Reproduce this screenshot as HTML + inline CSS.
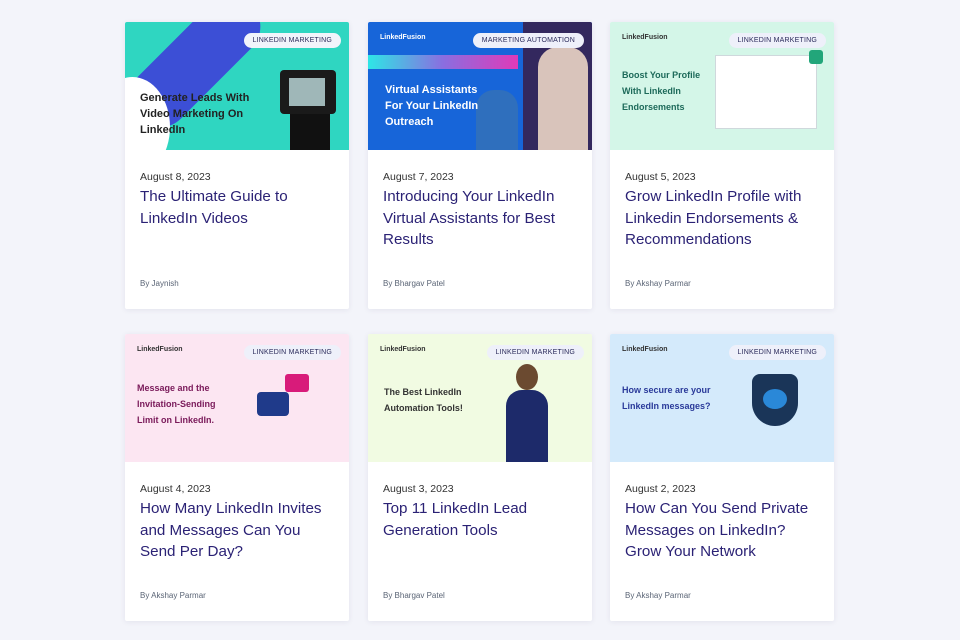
<!DOCTYPE html>
<html><head><style>
*{margin:0;padding:0;box-sizing:border-box}
body{width:960px;height:640px;background:#f3f4fa;font-family:"Liberation Sans",sans-serif;position:relative;overflow:hidden}
.card{position:absolute;width:224px;height:287px;background:#fff;box-shadow:0 1px 6px rgba(40,40,90,.08);border-radius:2px;overflow:hidden}
.img{position:absolute;left:0;top:0;width:224px;height:128px;overflow:hidden}
.tag{position:absolute;right:8px;top:11px;background:#eef0fa;border-radius:9px;font-size:7px;color:#2a2a5a;padding:4px 9px;letter-spacing:.2px}
.date{position:absolute;left:15px;top:149px;font-size:10.5px;color:#333}
.title{position:absolute;left:15px;top:164px;width:200px;font-size:15.2px;line-height:21.5px;color:#2b2275}
.by{position:absolute;left:15px;top:257px;font-size:8px;color:#5a6475}
.h{position:absolute;font-weight:bold;font-size:11px;line-height:16px}
.logo{position:absolute;left:12px;top:12px;font-size:7px;font-weight:bold;color:#333}
</style></head><body>

<div class="card" style="left:125px;top:22px">
 <div class="img" style="background:#2fd6c1">
  <div style="position:absolute;left:40px;top:-40px;width:60px;height:160px;background:#3c4fd6;border-radius:30px;transform:rotate(45deg)"></div>
  <div style="position:absolute;left:-30px;top:55px;width:75px;height:100px;background:#fff;border-radius:50%"></div>
  <div style="position:absolute;left:155px;top:48px;width:56px;height:44px;background:#1a1a1a;border-radius:4px"></div>
  <div style="position:absolute;left:164px;top:56px;width:36px;height:28px;background:#9fb7b8"></div>
  <div style="position:absolute;left:165px;top:92px;width:40px;height:36px;background:#111"></div>
  <div class="h" style="left:15px;top:68px;color:#222">Generate Leads With<br>Video Marketing On<br>LinkedIn</div>
  <div class="tag" style="background:#f1f4fb">LINKEDIN MARKETING</div>
 </div>
 <div class="date">August 8, 2023</div>
 <div class="title">The Ultimate Guide to LinkedIn Videos</div>
 <div class="by">By Jaynish</div>
</div>

<div class="card" style="left:368px;top:22px">
 <div class="img" style="background:#1765d9">
  <div style="position:absolute;left:0;top:33px;width:150px;height:14px;background:linear-gradient(90deg,#2ee6e6,#8a6ee0,#e03ab8)"></div>
  <div style="position:absolute;left:155px;top:0;width:69px;height:128px;background:#33285e"></div>
  <div style="position:absolute;left:170px;top:25px;width:50px;height:103px;background:#d9c4bb;border-radius:20px 20px 0 0"></div>
  <div style="position:absolute;left:108px;top:68px;width:42px;height:60px;background:#2f6fbd;border-radius:18px 18px 0 0"></div>
  <div class="logo" style="color:#fff">LinkedFusion</div>
  <div class="h" style="left:17px;top:60px;color:#fff">Virtual Assistants<br>For Your LinkedIn<br>Outreach</div>
  <div class="tag">MARKETING AUTOMATION</div>
 </div>
 <div class="date">August 7, 2023</div>
 <div class="title">Introducing Your LinkedIn Virtual Assistants for Best Results</div>
 <div class="by">By Bhargav Patel</div>
</div>

<div class="card" style="left:610px;top:22px">
 <div class="img" style="background:#d4f6e8">
  <div style="position:absolute;left:105px;top:33px;width:102px;height:74px;background:#fff;border:1px solid #cfd8dc"></div>
  <div style="position:absolute;left:199px;top:28px;width:14px;height:14px;background:#22a67a;border-radius:3px"></div>
  <div class="logo">LinkedFusion</div>
  <div class="h" style="left:12px;top:45px;font-size:9px;color:#1d6a5a">Boost Your Profile<br>With LinkedIn<br>Endorsements</div>
  <div class="tag">LINKEDIN MARKETING</div>
 </div>
 <div class="date">August 5, 2023</div>
 <div class="title">Grow LinkedIn Profile with Linkedin Endorsements &amp; Recommendations</div>
 <div class="by">By Akshay Parmar</div>
</div>

<div class="card" style="left:125px;top:334px">
 <div class="img" style="background:#fce6f2">
  <div style="position:absolute;left:160px;top:40px;width:24px;height:18px;background:#d81b7a;border-radius:3px"></div>
  <div style="position:absolute;left:132px;top:58px;width:32px;height:24px;background:#1f3a8a;border-radius:4px"></div>
  <div class="logo">LinkedFusion</div>
  <div class="h" style="left:12px;top:46px;font-size:9px;color:#7a1a5a">Message and the<br>Invitation-Sending<br>Limit on LinkedIn.</div>
  <div class="tag">LINKEDIN MARKETING</div>
 </div>
 <div class="date">August 4, 2023</div>
 <div class="title">How Many LinkedIn Invites and Messages Can You Send Per Day?</div>
 <div class="by">By Akshay Parmar</div>
</div>

<div class="card" style="left:368px;top:334px">
 <div class="img" style="background:#f1fbe2">
  <div style="position:absolute;left:148px;top:30px;width:22px;height:26px;background:#6b4a30;border-radius:50%"></div>
  <div style="position:absolute;left:138px;top:56px;width:42px;height:72px;background:#1d2a6a;border-radius:16px 16px 0 0"></div>
  <div class="logo">LinkedFusion</div>
  <div class="h" style="left:16px;top:50px;font-size:9px;color:#333">The Best LinkedIn<br>Automation Tools!</div>
  <div class="tag">LINKEDIN MARKETING</div>
 </div>
 <div class="date">August 3, 2023</div>
 <div class="title">Top 11 LinkedIn Lead Generation Tools</div>
 <div class="by">By Bhargav Patel</div>
</div>

<div class="card" style="left:610px;top:334px">
 <div class="img" style="background:#d4eafb">
  <div style="position:absolute;left:142px;top:40px;width:46px;height:52px;background:#1a3558;border-radius:8px 8px 23px 23px"></div>
  <div style="position:absolute;left:153px;top:55px;width:24px;height:20px;background:#2a88d8;border-radius:50%"></div>
  <div class="logo">LinkedFusion</div>
  <div class="h" style="left:12px;top:48px;font-size:9px;color:#2a3a9a">How secure are your<br>LinkedIn messages?</div>
  <div class="tag">LINKEDIN MARKETING</div>
 </div>
 <div class="date">August 2, 2023</div>
 <div class="title">How Can You Send Private Messages on LinkedIn? Grow Your Network</div>
 <div class="by">By Akshay Parmar</div>
</div>

</body></html>
